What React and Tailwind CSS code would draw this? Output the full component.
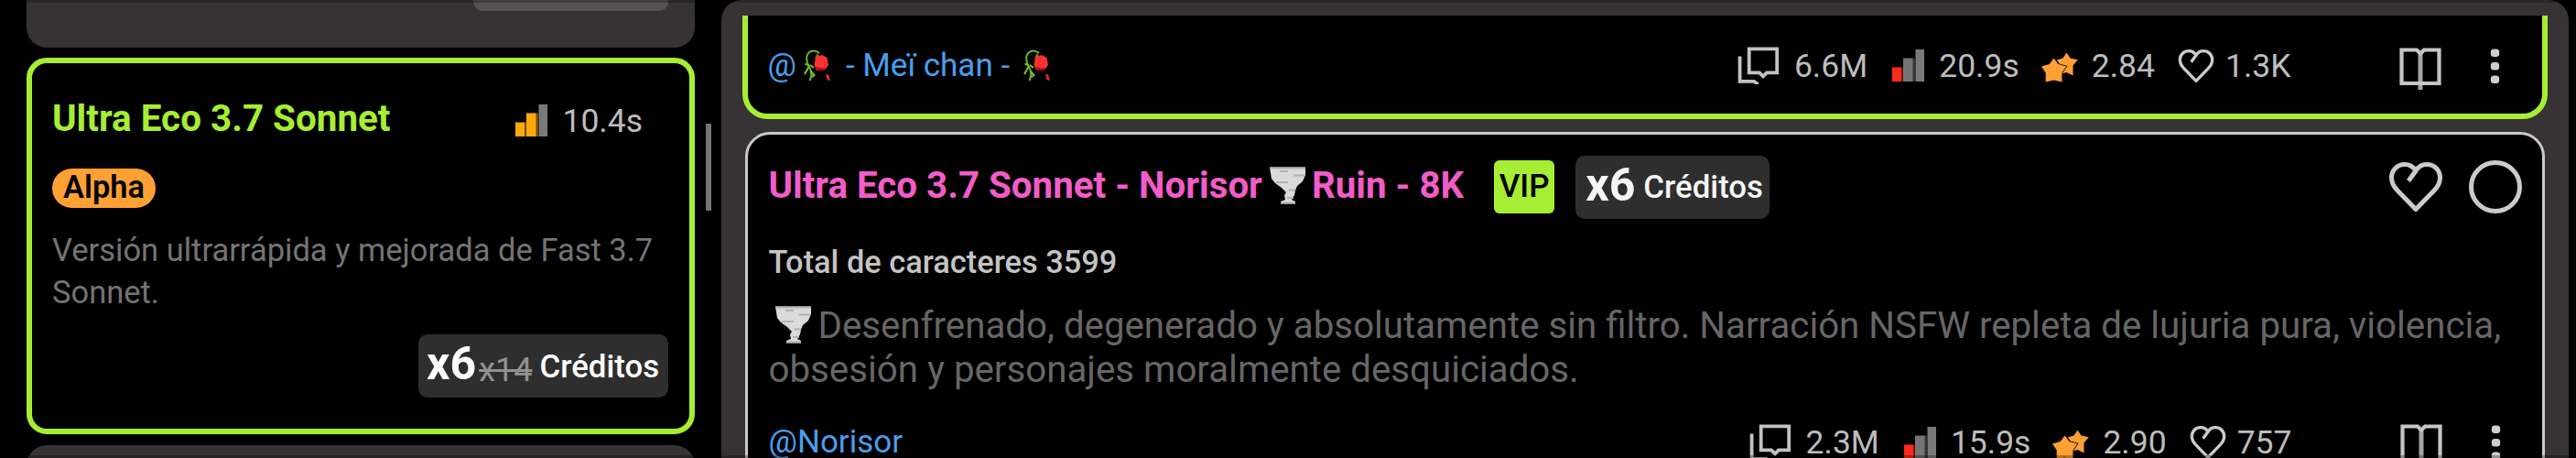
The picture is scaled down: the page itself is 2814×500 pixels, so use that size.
/**
 * FILE: App.jsx
 * PURPOSE: Model picker with the model list on the left and prompts on the right
 */

import React from "react";

const prompts = {
  first: { messages: "6.6M", speed: "20.9s", rating: "2.84", likes: "1.3K" },
  second: { messages: "2.3M", speed: "15.9s", rating: "2.90", likes: "757" },
};

const SPEED_COLORS = {
  medium: ["#ffa80a", "#ffa80a", "#7a7a7a"],
  slow: ["#fe2a1c", "#757575", "#7a7a7a"],
};

function SpeedBars({ level }) {
  const [a, b, c] = SPEED_COLORS[level];
  return (
    <svg className="w-[35px] h-[35px] shrink-0" viewBox="0 0 35 35">
      <rect x="10" y="19.5" width="2" height="15.5" fill={a} opacity="0.45" />
      <rect x="22" y="9.5" width="3" height="25.5" fill={b} opacity="0.45" />
      <rect x="0" y="19.5" width="10" height="15.5" fill={a} />
      <rect x="12" y="9.5" width="10.5" height="25.5" fill={b} />
      <rect x="25.5" y="0" width="9.5" height="35" fill={c} />
    </svg>
  );
}

function MessagesIcon() {
  return (
    <svg className="w-[46px] h-[41px] shrink-0" viewBox="0 0 46 41" fill="none" stroke="#c2c2c2" strokeWidth="3.8">
      <path d="M12.7 2.3H43.2V28.3H32L28 32.3L24 28.3H12.7Z" />
      <path d="M2.6 10.5V37.8H18L22.5 41" />
    </svg>
  );
}

function StarsIcon() {
  return (
    <svg className="w-[40px] h-[33px] shrink-0" viewBox="0 0 40 33" fill="#ffa035">
      <path d="M27.5 0.5L31.5 6.5L39.8 8.2L34.5 14.5L34.5 25.5L27.5 22L20.5 24L21 14.5L17 8.5L23.5 6.5Z" />
      <path
        d="M13.600 6.500L18.500 13L27.200 15.500L22.500 22.600L22.500 32.500L13.600 30.500L4.700 32.500L4.700 22.600L0 15.500L8.700 13Z"
        stroke="#000"
        strokeWidth="1.5"
        paintOrder="stroke"
      />
    </svg>
  );
}

function HeartIcon({ className, strokeWidth }) {
  return (
    <svg className={className} viewBox="0 0 58 54" fill="none" stroke="#cbcbcb" strokeWidth={strokeWidth}>
      <path d="M21 20.5L29 9.5C32 4.5 36 2.5 41 2.5C49.5 2.5 55.5 9 55.5 17C55.5 23 53 27 49 31L29 51.5L9 31C5 27 2.5 23 2.5 17C2.5 9 8.5 2.5 17 2.5C22 2.5 26 4.5 29 9.5" />
    </svg>
  );
}

function BookIcon() {
  return (
    <svg className="w-[46px] h-[46px] shrink-0" viewBox="0 0 46 46" fill="none" stroke="#c6c6c6" strokeWidth="4.2">
      <path d="M23 6V46" stroke="#a4a4a4" strokeWidth="5" />
      <path d="M23 6.5L19 2.5H2.5V39H43.5V2.5H27Z" />
    </svg>
  );
}

function DotsIcon() {
  return (
    <svg className="w-[11px] h-[40px] shrink-0" viewBox="0 0 11 40" fill="#cfcfcf">
      <rect x="0.8" y="1.5" width="9.4" height="8.5" rx="3.5" />
      <rect x="0.8" y="16" width="9.4" height="8.5" rx="3.5" />
      <rect x="0.8" y="30.5" width="9.4" height="8.5" rx="3.5" />
    </svg>
  );
}

function RoseIcon() {
  return (
    <svg className="w-[30px] h-[35px] shrink-0" viewBox="0 0 30 35" fill="none">
      <path d="M17 4C12 0 5.5 1 3.5 7C2.500 11 3.500 15 6 19C9 24 9 29 6.500 34" stroke="#6fb32a" strokeWidth="2" />
      <path d="M5.5 19L1 27M6 18L1.5 15.5M8 24L11.5 28L9 30M7 17L11 20" stroke="#7cc42b" strokeWidth="2" />
      <path d="M12 10L17 8L15 4Z" fill="#5da021" />
      <path d="M13 8L20 6L25.5 9L27 17L23 22.5L14 23L11.5 17Z" fill="#fb3030" />
      <path d="M12.5 19L15 23H21L25 20L19 20.5Z" fill="#a8082c" />
      <path d="M24 27L27 27.5L29 34L25.5 33Z" fill="#e82a2e" />
    </svg>
  );
}

function TornadoIcon() {
  return (
    <svg className="w-[41px] h-[41px] shrink-0" viewBox="0 0 41 41">
      <path d="M1 0.5H40V9L37 16L31 21L29 26L28 31L25 36L29 38V40.5H13V38L18 36L17 31L19 28L14 23L7 18L3 13Z" fill="#dadada" />
      <path
        d="M1 1.5H40M12 5H21M27 9.5H39M8 17H21M22 25.5H29M20 34H27M13 39.5H29"
        stroke="#b2b2b2"
        strokeWidth="2.2"
      />
    </svg>
  );
}

function PromptStats({ stats }) {
  return (
    <div className="ml-auto flex h-[46px] items-center text-[35.5px] leading-[46px] text-[#bdbdbd]">
      <MessagesIcon />
      <span className="ml-[16px]">{stats.messages}</span>
      <span className="ml-[27px] flex items-center">
        <SpeedBars level="slow" />
      </span>
      <span className="ml-[16px]">{stats.speed}</span>
      <span className="ml-[24px] pt-1">
        <StarsIcon />
      </span>
      <span className="ml-[15px]">{stats.rating}</span>
      <HeartIcon className="ml-[25px] h-[36px] w-[40px] shrink-0" strokeWidth="5" />
      <span className="ml-[12px]">{stats.likes}</span>
      <span className="ml-[118px] pt-[6px]">
        <BookIcon />
      </span>
      <span className="ml-[53px]">
        <DotsIcon />
      </span>
    </div>
  );
}

function ModelList() {
  return (
    <aside className="flex h-full w-[730px] shrink-0 flex-col">
      <div className="flex h-[52px] shrink-0 items-start justify-end rounded-b-[22px] bg-[#373334] pr-[29px]">
        <div className="h-[12px] w-[213px] rounded-b-[10px] bg-[#545253]"></div>
      </div>

      <div className="mt-[11px] flex h-[411px] shrink-0 flex-col rounded-[22px] border-[6px] border-[#a6ee33] bg-black pl-[22px] pr-[23px] pt-[40px]">
        <div className="flex h-[45px] items-center">
          <h2 className="pb-[3px] text-[40.4px] font-bold leading-[42px] text-[#a6ee33]">Ultra Eco 3.7 Sonnet</h2>
          <div className="ml-auto mr-[28px] flex items-center gap-[16px] text-[35.5px] leading-[44px] text-[#bdbdbd]">
            <SpeedBars level="medium" />
            <span>10.4s</span>
          </div>
        </div>
        <span className="mt-[30px] flex h-[43px] w-[113px] shrink-0 items-center justify-center rounded-full bg-[#ffa035] pb-[3px] text-[34.4px] font-semibold leading-[40px] text-black">
          Alpha
        </span>
        <p className="mt-[23px] text-[34.5px] leading-[46px] text-[#747474]">
          Versión ultrarrápida y mejorada de Fast 3.7 Sonnet.
        </p>
        <div className="mt-[23px] flex h-[69px] w-[273px] shrink-0 items-center self-end rounded-[10px] bg-[#2e2e2e] pl-[9px] text-white">
          <span className="pb-[6px] text-[50px] font-bold leading-[56px]">x6</span>
          <span className="ml-[3px] pt-[8px] text-[36px] leading-[44px] text-[#929292] line-through">x14</span>
          <span className="ml-[8px] text-[34.8px] font-medium leading-[42px]">Créditos</span>
        </div>
      </div>

      <div className="mt-[12px] h-[60px] shrink-0 rounded-t-[22px] bg-[#373334]"></div>
    </aside>
  );
}

function PromptPanel() {
  return (
    <main className="h-full w-[2018px] shrink-0 rounded-t-[22px] bg-[#373334] pl-[23px] pt-[17px]">
      <div className="flex h-[112.5px] w-[1972px] items-center rounded-b-[27px] border-x-[6px] border-b-[6px] border-[#a6ee33] bg-black pl-[22px] pr-[46px] pt-[3px]">
        <div className="flex items-center text-[35px] leading-[44px] text-[#4a9eeb]">
          <span>@</span>
          <span className="ml-[8px]">
            <RoseIcon />
          </span>
          <span className="ml-[16px]">- Meï chan -</span>
          <span className="ml-[15px]">
            <RoseIcon />
          </span>
        </div>
        <PromptStats stats={prompts.first} />
      </div>

      <div className="ml-[3px] mt-[14px] flex h-[420px] w-[1966px] flex-col rounded-[27px] border-[3px] border-[#c9c9c9] bg-black pl-[23px] pr-[22px] pt-[23px]">
        <div className="flex h-[69px] shrink-0 items-center">
          <h2 className="flex items-center pb-[3px] text-[40.3px] font-bold leading-[46px] text-[#f25cc8]">
            <span>Ultra Eco 3.7 Sonnet - Norisor</span>
            <span className="ml-[7px] pb-[1px]">
              <TornadoIcon />
            </span>
            <span className="ml-[6px]">Ruin - 8K</span>
          </h2>
          <span className="ml-[33px] flex h-[58px] w-[66px] items-center justify-center rounded-[6px] bg-[#a6ee33] text-[35px] font-medium leading-[42px] text-black">
            VIP
          </span>
          <div className="ml-[23px] flex h-[69px] w-[212px] items-center rounded-[10px] bg-[#2e2e2e] pl-[11px] text-[#f5f5f5]">
            <span className="pb-[5px] text-[50px] font-bold leading-[56px]">x6</span>
            <span className="ml-[9px] text-[34.8px] font-medium leading-[42px]">Créditos</span>
          </div>
          <HeartIcon className="ml-auto h-[54px] w-[58px] shrink-0" strokeWidth="5" />
          <span className="ml-[29px] h-[58px] w-[58px] shrink-0 rounded-full border-[5.5px] border-[#cbcbcb]"></span>
        </div>
        <p className="mt-[25px] text-[34.4px] font-medium leading-[44px] text-[#c4c4c4]">Total de caracteres 3599</p>
        <p className="mt-[24px] text-[40.25px] leading-[48.4px] text-[#666]">
          <span className="ml-[6px] mr-[7px] inline-block h-[41px] align-[-6px]">
            <TornadoIcon />
          </span>
          Desenfrenado, degenerado y absolutamente sin filtro. Narración NSFW repleta de lujuria pura, violencia,
          obsesión y personajes moralmente desquiciados.
        </p>
        <div className="mt-[32px] flex shrink-0 items-center pr-[23px]">
          <span className="text-[35px] leading-[44px] text-[#4a9eeb]">@Norisor</span>
          <PromptStats stats={prompts.second} />
        </div>
      </div>
    </main>
  );
}

function App() {
  return (
    <div className="relative flex h-[500px] w-full overflow-hidden bg-black pl-[29px] font-[Roboto,sans-serif]">
      <ModelList />
      {/* Scrollbar of the model list */}
      <div className="w-[28.5px] shrink-0 pl-[11.5px] pt-[135px]">
        <div className="h-[95px] w-[6px] bg-[#757575]"></div>
      </div>
      <PromptPanel />
      <div className="absolute inset-x-0 top-0 h-[3px] bg-black/25"></div>
      <div className="absolute inset-x-0 bottom-0 h-[3px] bg-black/30"></div>
    </div>
  );
}

export default App;
